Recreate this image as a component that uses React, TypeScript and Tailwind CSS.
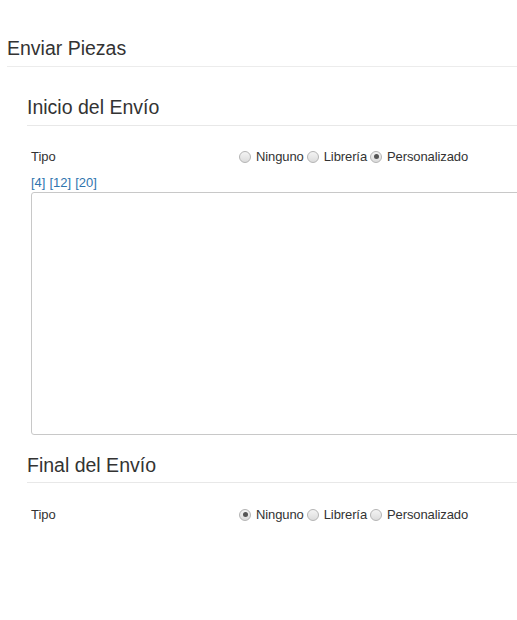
import React from "react";

type Opt = { label: string; checked?: boolean };

function Radio({ checked }: { checked?: boolean }) {
  return (
    <span className="inline-flex h-[12px] w-[12px] items-center justify-center rounded-full border border-[#b4b4b4] bg-gradient-to-b from-[#f4f4f4] to-[#dcdcdc]">
      {checked && <span className="h-[5px] w-[5px] rounded-full bg-[#555]" />}
    </span>
  );
}

function TipoRow({ options }: { options: Opt[] }) {
  return (
    <div className="flex items-center pl-[4px] text-[13px] leading-[15px] text-[#333]">
      <span className="w-[208px]">Tipo</span>
      <div className="flex items-center gap-[3px]">
        {options.map((o) => (
          <label key={o.label} className="flex items-center gap-[5px]">
            <Radio checked={o.checked} />
            <span className="tracking-[-0.1px]">{o.label}</span>
          </label>
        ))}
      </div>
    </div>
  );
}

function SectionTitle({ children, pb }: { children: React.ReactNode; pb: string }) {
  return (
    <h2 className={`border-b border-[#e8e8e8] text-[19.5px] leading-[22px] text-[#333] ${pb}`}>
      {children}
    </h2>
  );
}

export default function App() {
  return (
    <div
      className="h-[620px] w-[517px] overflow-hidden bg-white"
      style={{ fontFamily: '"Liberation Sans", Arial, sans-serif' }}
    >
      <div className="w-[620px] pl-[7px] pt-[37px]">
        <h1 className="border-b border-[#ececec] pb-[7px] text-[19.5px] leading-[22px] text-[#333]">
          Enviar Piezas
        </h1>
        <div className="pl-[20px]">
          <div className="pt-[29px]">
            <SectionTitle pb="pb-[7px]">Inicio del Envío</SectionTitle>
            <div className="pt-[23px]">
              <TipoRow
                options={[
                  { label: "Ninguno" },
                  { label: "Librería" },
                  { label: "Personalizado", checked: true },
                ]}
              />
            </div>
            <div className="pl-[4px] pt-[11px]">
              <div className="flex gap-[4px] text-[13px] leading-[15px] text-[#2f74ae]">
                <a href="#">[4]</a>
                <a href="#">[12]</a>
                <a href="#">[20]</a>
              </div>
              <textarea className="mt-[2px] block h-[243px] w-[560px] resize-none rounded-[3px] border border-[#c8c8c8]" />
            </div>
          </div>
          <div className="pt-[19px]">
            <SectionTitle pb="pb-[6px]">Final del Envío</SectionTitle>
            <div className="pt-[24px]">
              <TipoRow
                options={[
                  { label: "Ninguno", checked: true },
                  { label: "Librería" },
                  { label: "Personalizado" },
                ]}
              />
            </div>
          </div>
        </div>
      </div>
    </div>
  );
}
